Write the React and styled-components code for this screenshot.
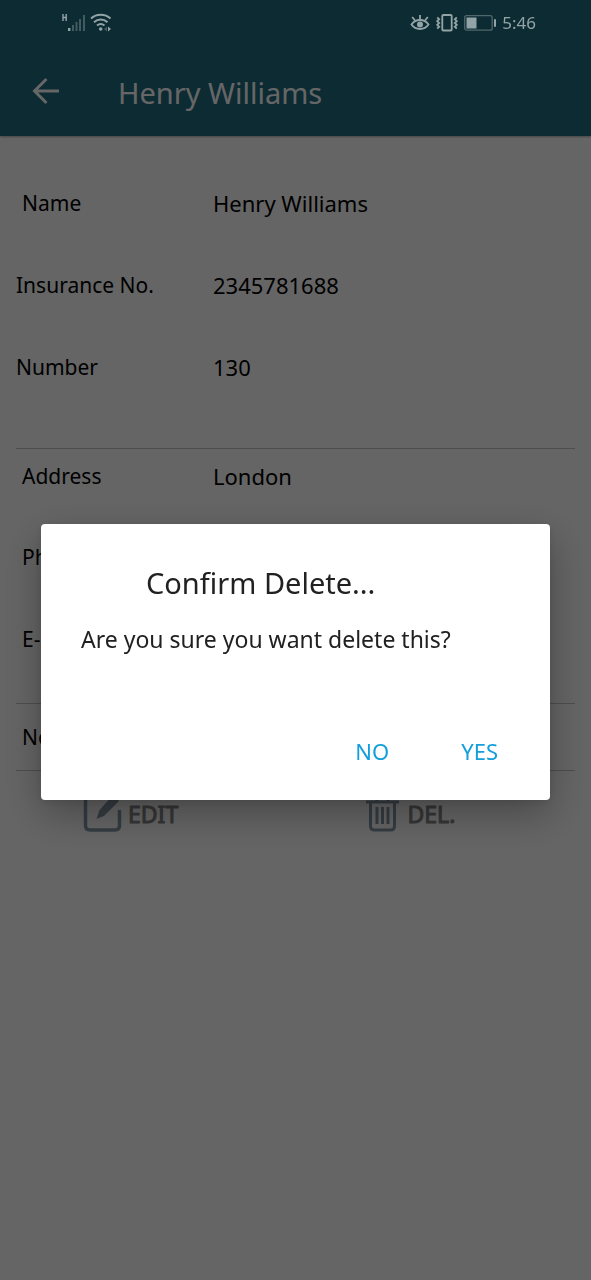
import React from 'react';
import styled, { createGlobalStyle } from 'styled-components';

const EstiloGlobal = createGlobalStyle`
    * {
        box-sizing: border-box;
    }
    body {
        margin: 0;
        background: #fcfcfc;
        font-family: "Noto Sans", "Open Sans", sans-serif;
    }
    h1, h2, p, dl, dt, dd {
        margin: 0;
        font-weight: 400;
    }
    button {
        border: none;
        background: none;
        padding: 0;
        font-family: inherit;
        cursor: pointer;
    }
    svg {
        display: block;
    }
`

const Page = styled.div`
    min-height: 100vh;
    background: #fcfcfc;
`
const StatusBar = styled.div`
    position: fixed;
    z-index: 3;
    top: 0;
    left: 0;
    right: 0;
    height: 45px;
    padding: 0 55px 0 61px;
    display: flex;
    align-items: center;
    justify-content: space-between;
    background: #0c2b33;
    color: #93a4a6;
`
const StatusGroup = styled.div`
    display: flex;
    align-items: center;
    gap: ${props => props.$gap || '4px'};
`
const Clock = styled.span`
    font-size: 17px;
    line-height: 24px;
`
const Header = styled.header`
    height: 136px;
    padding: 45px 32px 0;
    display: flex;
    align-items: center;
    gap: 58px;
    background: #1e6b80;
    color: #ffffff;
    box-shadow: 0 1px 2px rgba(0, 0, 0, 0.3);
`
const BackButton = styled.button`
    color: #ffffff;
`
const Title = styled.h1`
    font-size: 29px;
    line-height: 40px;
    padding-top: 4px;
`
const Content = styled.main`
    padding: 26px 16px 0;
`
const Section = styled.dl`
    padding-bottom: ${props => props.$bottom || '0'};
    border-bottom: 1px solid #c4c4c4;
`
const Row = styled.div`
    display: grid;
    grid-template-columns: 197px 1fr;
    align-items: center;
    height: ${props => props.$height || '82px'};
    line-height: 32px;
    color: #000000;
`
const Label = styled.dt`
    padding-left: ${props => (props.$indent ? '6px' : '0')};
    font-size: 21px;
`
const Value = styled.dd`
    font-size: 22px;
`
const Actions = styled.div`
    display: flex;
    padding-top: 24px;
`
const ActionButton = styled.button`
    flex: 1;
    padding-left: 66px;
    display: flex;
    align-items: center;
    gap: 6px;
    font-size: 23px;
    line-height: 32px;
    color: #858585;
    -webkit-text-stroke: 1px #858585;
`
const Overlay = styled.div`
    position: fixed;
    z-index: 2;
    inset: 0;
    padding: 44px 41px 0;
    display: flex;
    align-items: center;
    background: rgba(0, 0, 0, 0.6);
`
const Dialog = styled.div`
    width: 100%;
    padding: 39px 40px 33px;
    border-radius: 4px;
    background: #ffffff;
    color: #212121;
    box-shadow: 0 14px 40px rgba(0, 0, 0, 0.3), 0 2px 8px rgba(0, 0, 0, 0.1);
`
const DialogTitle = styled.h2`
    padding-left: 65px;
    font-size: 29px;
    line-height: 40px;
`
const DialogText = styled.p`
    margin-top: 20px;
    font-size: 23px;
    line-height: 32px;
`
const DialogButtons = styled.div`
    display: flex;
    justify-content: flex-end;
    gap: 72px;
    padding: 80px 12px 0 0;
`
const DialogButton = styled.button`
    font-size: 22px;
    line-height: 32px;
    color: #149fdb;
`

const SignalIcon = () => (
    <svg width="25" height="22" viewBox="0 0 25 22" fill="currentColor">
        <path d="M2 2v7M5.200 2v7M2 5.500h3.200" stroke="currentColor" strokeWidth="1.400" fill="none" />
        <rect x="7" y="16" width="2.400" height="3" />
        <g opacity="0.4">
            <rect x="11" y="13" width="2" height="6" />
            <rect x="14.500" y="10" width="2" height="9" />
            <rect x="18" y="7" width="2" height="12" />
            <rect x="22" y="3" width="2" height="16" />
        </g>
    </svg>
)

const WifiIcon = () => (
    <svg width="22" height="22" viewBox="0 0 22 22" fill="none" stroke="currentColor" strokeWidth="2">
        <path d="M1 6.500c5.500-5 14-5 19.500 0" />
        <path d="M4 10.200c4-3.600 9.500-3.600 13.500 0" />
        <path d="M7 13.600c2.200-1.900 5.300-1.900 7.500 0" />
        <circle cx="10.700" cy="17" r="1.800" fill="currentColor" stroke="none" />
        <path d="M18 14.500l3 2.500-3 2.500z" fill="currentColor" stroke="none" />
        <path d="M17 14.500l-3 2.500 3 2.500z" fill="currentColor" stroke="none" opacity="0.4" />
    </svg>
)

const EyeIcon = () => (
    <svg width="20" height="20" viewBox="0 0 20 20" fill="none" stroke="currentColor" strokeWidth="1.800">
        <path d="M1.500 11.500c4-6 13-6 17 0-4 6-13 6-17 0z" />
        <circle cx="10" cy="11.500" r="3" fill="currentColor" stroke="none" />
        <path d="M10 6.500V2M5 7.500L2.200 4M15 7.500L17.800 4" />
    </svg>
)

const VibrateIcon = () => (
    <svg width="22" height="20" viewBox="0 0 22 20" fill="none" stroke="currentColor" strokeWidth="1.800">
        <rect x="6.300" y="2" width="9.400" height="15.500" rx="1" />
        <path d="M1.200 4.500l2 1.800-2 1.900 2 1.800-2 1.900 2 1.800-2 1.800" />
        <path d="M20.800 4.500l-2 1.800 2 1.900-2 1.800 2 1.900-2 1.800 2 1.800" />
    </svg>
)

const BatteryIcon = () => (
    <svg width="32" height="18" viewBox="0 0 32 18">
        <rect x="0.700" y="1.700" width="27.500" height="14.500" rx="2" fill="none" stroke="currentColor" strokeWidth="1.300" opacity="0.5" />
        <rect x="2.500" y="3.500" width="10" height="11" fill="currentColor" />
        <rect x="30" y="5" width="2" height="8" rx="1" fill="currentColor" />
    </svg>
)

const ArrowIcon = () => (
    <svg width="28" height="28" viewBox="0 0 28 28" fill="none" stroke="currentColor" strokeWidth="3">
        <path d="M27 14H3M14.500 2L2.500 14l12 12" />
    </svg>
)

const EditIcon = () => (
    <svg width="40" height="38" viewBox="0 2 40 38" fill="none">
        <path d="M22 4H8Q3.500 4 3.500 8.500v24Q3.500 37 8 37h25q4.500 0 4.500-4.500V17" stroke="#8497a5" strokeWidth="3.500" />
        <path d="M14.500 26l3-9L31 2l6 6-15 15z" fill="#8497a5" />
    </svg>
)

const TrashIcon = () => (
    <svg width="40" height="38" viewBox="-4 2 40 38" fill="none" stroke="#8497a5" strokeWidth="3">
        <path d="M0 9h33M11 8V4h11v4" />
        <path d="M4.500 10v23q0 4 4 4h16q4 0 4-4V10" />
        <path d="M11 14v17M16.500 14v17M22 14v17" />
    </svg>
)

class App extends React.Component {
    constructor(props) {
        super(props)
        this.state = {
            dialogOpen: true
        }
    }

    openDialog = () => {
        this.setState({ dialogOpen: true })
    }

    closeDialog = () => {
        this.setState({ dialogOpen: false })
    }

    render() {
        return (
            <Page>
                <EstiloGlobal />
                <StatusBar>
                    <StatusGroup>
                        <SignalIcon />
                        <WifiIcon />
                    </StatusGroup>
                    <StatusGroup $gap="6px">
                        <EyeIcon />
                        <VibrateIcon />
                        <BatteryIcon />
                        <Clock>5:46</Clock>
                    </StatusGroup>
                </StatusBar>

                <Header>
                    <BackButton aria-label="Back"><ArrowIcon /></BackButton>
                    <Title>Henry Williams</Title>
                </Header>

                <Content>
                    <Section $bottom="40px">
                        <Row><Label $indent>Name</Label><Value>Henry Williams</Value></Row>
                        <Row><Label>Insurance No.</Label><Value>2345781688</Value></Row>
                        <Row><Label>Number</Label><Value>130</Value></Row>
                    </Section>
                    <Section $bottom="36px">
                        <Row $height="54px"><Label $indent>Address</Label><Value>London</Value></Row>
                        <Row $height="108px"><Label $indent>Phone</Label></Row>
                        <Row $height="56px"><Label $indent>E-mail</Label></Row>
                    </Section>
                    <Section>
                        <Row $height="66px"><Label $indent>Notes</Label></Row>
                    </Section>
                    <Actions>
                        <ActionButton><EditIcon />EDIT</ActionButton>
                        <ActionButton onClick={this.openDialog}><TrashIcon />DEL.</ActionButton>
                    </Actions>
                </Content>

                {this.state.dialogOpen && (
                    <Overlay>
                        <Dialog role="dialog" aria-modal="true" aria-labelledby="dialog-title">
                            <DialogTitle id="dialog-title">Confirm Delete...</DialogTitle>
                            <DialogText>Are you sure you want delete this?</DialogText>
                            <DialogButtons>
                                <DialogButton onClick={this.closeDialog}>NO</DialogButton>
                                <DialogButton onClick={this.closeDialog}>YES</DialogButton>
                            </DialogButtons>
                        </Dialog>
                    </Overlay>
                )}
            </Page>
        )
    }
}

export default App;
